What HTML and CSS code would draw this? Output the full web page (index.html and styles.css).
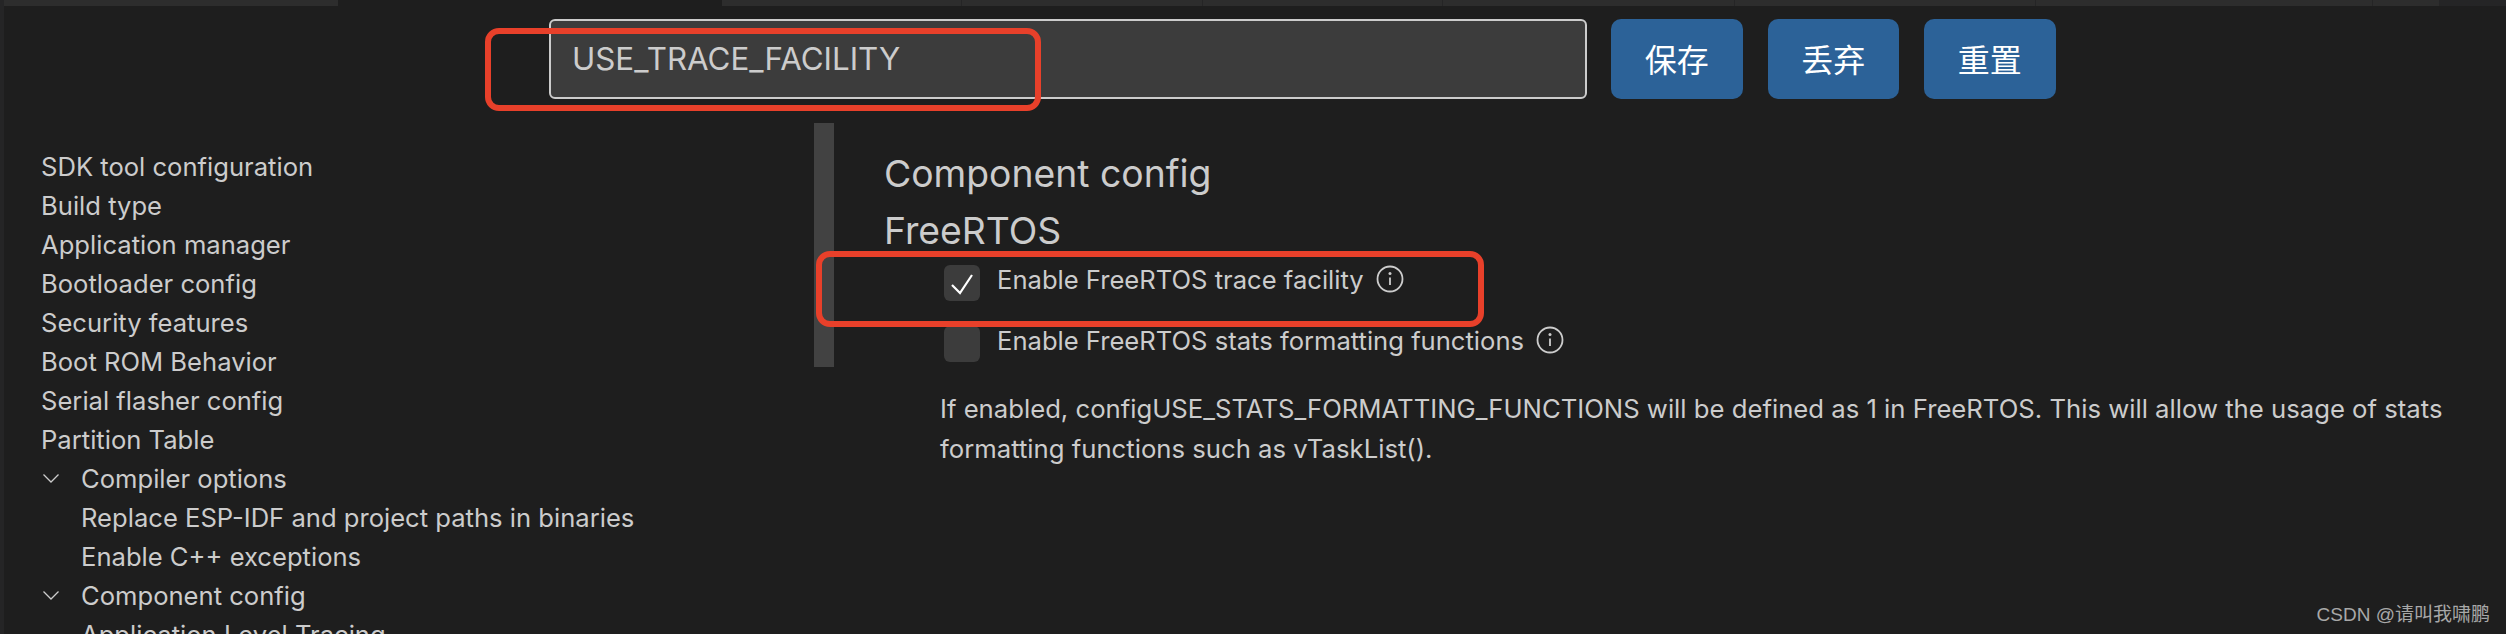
FILE: index.html
```html
<!DOCTYPE html>
<html lang="en">
<head>
    <meta charset="UTF-8">
    <meta name="viewport" content="width=device-width, initial-scale=1.0">
    <title>SDK Configuration Editor</title>
    <link rel="stylesheet" href="styles.css">
</head>
<body>
    <div class="edge-thumb"></div>

    <div class="tabs">
        <div class="tab tab-first"></div>
        <div class="tab tab-active"></div>
        <div class="tab tab-a"></div>
        <div class="tab tab-b"></div>
        <div class="tab tab-c"></div>
        <div class="tab tab-d"></div>
        <div class="tab tab-e"></div>
        <div class="tab tab-f"></div>
        <div class="tab tab-g"></div>
    </div>

    <div class="toolbar">
        <input class="search" type="text" value="USE_TRACE_FACILITY">
        <button class="btn">保存</button>
        <button class="btn">丢弃</button>
        <button class="btn">重置</button>
    </div>

    <div class="content">
        <div class="nav">
            <div class="nav-item">SDK tool configuration</div>
            <div class="nav-item">Build type</div>
            <div class="nav-item">Application manager</div>
            <div class="nav-item">Bootloader config</div>
            <div class="nav-item">Security features</div>
            <div class="nav-item">Boot ROM Behavior</div>
            <div class="nav-item">Serial flasher config</div>
            <div class="nav-item">Partition Table</div>
            <div class="nav-item">
                <svg class="chevron" viewBox="0 0 16 9"><path d="M0.5 0.5 L8 8 L15.5 0.5"/></svg>
                Compiler options
            </div>
            <div class="nav-item nav-child">Replace ESP-IDF and project paths in binaries</div>
            <div class="nav-item nav-child">Enable C++ exceptions</div>
            <div class="nav-item">
                <svg class="chevron" viewBox="0 0 16 9"><path d="M0.5 0.5 L8 8 L15.5 0.5"/></svg>
                Component config
            </div>
            <div class="nav-item nav-child">Application Level Tracing</div>
        </div>

        <div class="scrollbar"></div>

        <div class="detail">
            <h2 class="title">Component config</h2>
            <h2 class="title">FreeRTOS</h2>
            <div class="option">
                <span class="check">
                    <svg viewBox="0 0 36 36"><path d="M8 20 L16 28 L28 10"/></svg>
                </span>
                <span>Enable FreeRTOS trace facility</span>
                <svg class="info" viewBox="0 0 28 28"><circle cx="14" cy="14" r="12.5"/><path d="M14 12.5 V20"/><circle class="dot" cx="14" cy="8.5" r="1.5"/></svg>
            </div>
            <div class="option">
                <span class="check"></span>
                <span>Enable FreeRTOS stats formatting functions</span>
                <svg class="info" viewBox="0 0 28 28"><circle cx="14" cy="14" r="12.5"/><path d="M14 12.5 V20"/><circle class="dot" cx="14" cy="8.5" r="1.5"/></svg>
            </div>
            <p class="desc">If enabled, configUSE_STATS_FORMATTING_FUNCTIONS will be defined as 1 in FreeRTOS. This will allow the usage of stats formatting functions such as vTaskList().</p>
        </div>
    </div>

    <!-- hand drawn annotations -->
    <div class="mark mark-search"></div>
    <div class="mark mark-option"></div>

    <div class="watermark">CSDN @请叫我啸鹏</div>
</body>
</html>
```

FILE: styles.css
```css
html, body {
    height: 100%;
}
body {
    font-family: Inter, "Noto Sans CJK SC", sans-serif;
    background-color: #1e1e1e;
    color: #cccccc;
    margin: 0;
    overflow: hidden;
    position: relative;
    border-left: 4px solid #252526;
    box-sizing: border-box;
}
.edge-thumb {
    position: absolute;
    left: -4px;
    top: 314px;
    width: 4px;
    height: 44px;
    background-color: #3a3a3e;
}
.tabs {
    display: flex;
    height: 6px;
    background-color: #252526;
}
.tab {
    background-color: #2d2d2d;
    border-right: 1px solid #252526;
    box-sizing: border-box;
}
.tab-first { width: 334px; border-right: 0; }
.tab-active { width: 384px; background-color: #1e1e1e; border-right: 0; }
.tab-a { width: 240px; }
.tab-b { width: 241px; }
.tab-c { width: 240px; }
.tab-d { width: 292px; }
.tab-e { width: 301px; }
.tab-f { width: 337px; }
.tab-g { width: 67px; }
.toolbar {
    display: flex;
    gap: 25px;
    padding: 13px 0 0 545px;
}
.search {
    width: 1038px;
    height: 80px;
    margin-right: -1px;
    box-sizing: border-box;
    padding: 0 21px;
    background-color: #3c3c3c;
    border: 2px solid #cccccc;
    border-radius: 6px;
    color: #cccccc;
    font-family: inherit;
    font-size: 31.3px;
}
.btn {
    width: 131.5px;
    height: 80px;
    padding: 0 0 2px;
    border: 0;
    border-radius: 10px;
    background-color: #2c6298;
    color: #ffffff;
    font-family: "Noto Sans CJK SC", sans-serif;
    font-size: 32px;
}
.content {
    display: flex;
    padding-top: 24px;
}
.nav {
    width: 810px;
    padding: 24px 0 0 37px;
    box-sizing: border-box;
}
.nav-item {
    height: 39px;
    line-height: 39px;
    font-size: 25.6px;
    white-space: nowrap;
    display: flex;
    align-items: center;
    gap: 22px;
}
.nav-child {
    padding-left: 40px;
}
.chevron {
    width: 16px;
    height: 9px;
    margin-left: 2px;
    fill: none;
    stroke: #cccccc;
    stroke-width: 1.3;
}
.scrollbar {
    width: 20px;
    height: 244px;
    background-color: #424242;
}
.detail {
    flex: 1;
    padding: 22px 60px 0 50px;
}
.title {
    margin: 0;
    font-size: 37.3px;
    font-weight: 400;
    line-height: 57px;
}
.title + .option {
    margin-top: 6px;
}
.option {
    display: flex;
    align-items: flex-start;
    height: 61px;
    margin-left: 60px;
    font-size: 25.6px;
    line-height: 30px;
}
.check {
    width: 36px;
    height: 36px;
    margin-right: 17px;
    border-radius: 6px;
    background-color: #3c3c3c;
    flex: none;
}
.check svg {
    display: block;
    fill: none;
    stroke: #ffffff;
    stroke-width: 2.2;
}
.info {
    width: 28px;
    height: 28px;
    margin: 0 0 0 12px;
    fill: none;
    stroke: #cccccc;
    stroke-width: 1.8;
}
.info .dot {
    fill: #cccccc;
    stroke: none;
}
.desc {
    margin: 2px 0 0 56px;
    font-size: 25.7px;
    line-height: 40px;
}
.mark {
    position: absolute;
    box-sizing: border-box;
    border: 6px solid #e8402a;
    border-radius: 14px;
}
.mark-search {
    left: 481px;
    top: 28px;
    width: 556px;
    height: 83px;
}
.mark-option {
    left: 812px;
    top: 251px;
    width: 668px;
    height: 76px;
}
.watermark {
    position: absolute;
    right: 16px;
    bottom: 8px;
    font-family: "Liberation Sans", "Noto Sans CJK SC", sans-serif;
    font-size: 19px;
    color: #a8a8a8;
}
```
